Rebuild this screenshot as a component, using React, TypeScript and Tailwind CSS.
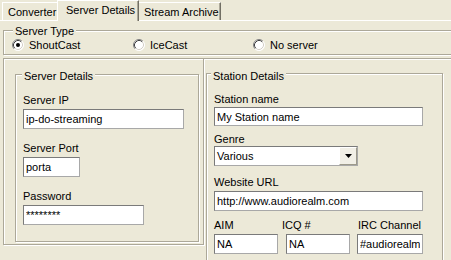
import React from 'react'

const etched = 'border border-[#aca899] shadow-[inset_1px_1px_0_#fff,1px_1px_0_#fff]'
const field =
  'block h-[20px] bg-white px-[2px] text-[11px] text-black outline-none border border-t-[#7a7a7a] border-l-[#7a7a7a] border-r-[#a8a8a8] border-b-[#a8a8a8]'

function Radio({ checked }: { checked?: boolean }) {
  return (
    <svg width="12" height="12" viewBox="0 0 12 12" className="shrink-0">
      <circle cx="6" cy="6" r="5.5" fill="#fff" />
      <path d="M2.11 9.89A5.5 5.5 0 0 1 9.89 2.11" fill="none" stroke="#808080" />
      <path d="M9.89 2.11A5.5 5.5 0 0 1 2.11 9.89" fill="none" stroke="#fff" />
      <path d="M2.82 9.18A4.5 4.5 0 0 1 9.18 2.82" fill="none" stroke="#404040" />
      <path d="M9.18 2.82A4.5 4.5 0 0 1 2.82 9.18" fill="none" stroke="#d4d0c8" />
      {checked && <circle cx="6" cy="6" r="2" fill="#000" />}
    </svg>
  )
}

function Field({ value, className }: { value: string; className: string }) {
  return <input readOnly value={value} className={`${field} ${className}`} />
}

export default function App() {
  return (
    <div className="w-[451px] h-[260px] overflow-hidden bg-[#ece9d8] text-[11px] leading-[13px] text-black font-['Liberation_Sans',Arial,sans-serif]">
      {/* Tabs */}
      <div className="relative z-10 flex items-end h-[20px]">
        <div className="ml-[2px] w-[57px] h-[18px] border-t border-l border-white pl-[5px] pt-[3px]">Converter</div>
        <div className="relative z-10 -mx-[2px] -mb-[1px] w-[82px] h-[21px] bg-[#ece9d8] border-t border-l border-white border-r border-r-[#716f64] shadow-[inset_-1px_0_0_#aca899] pl-[8px] pt-[3px]">
          Server Details
        </div>
        <div className="w-[84px] h-[18px] border-t border-l border-white border-r border-r-[#716f64] shadow-[inset_-1px_0_0_#aca899] pl-[6px] pt-[3px]">
          Stream Archive
        </div>
      </div>

      <div className="border-t border-white">
        {/* Server Type */}
        <div className={`relative mt-[9px] ml-[3px] w-[460px] h-[25px] ${etched}`}>
          <span className="absolute left-[9px] -top-[6px] px-[2px] bg-[#ece9d8]">Server Type</span>
          <div className="flex pl-[8px] pt-[8px]">
            <div className="flex items-center gap-[5px] w-[121px] h-[12px]">
              <Radio checked />
              <span>ShoutCast</span>
            </div>
            <div className="flex items-center gap-[5px] w-[120px] h-[12px]">
              <Radio />
              <span>IceCast</span>
            </div>
            <div className="flex items-center gap-[5px] w-[120px] h-[12px]">
              <Radio />
              <span>No server</span>
            </div>
          </div>
        </div>

        <div className="flex mt-[3px]">
          {/* Server Details */}
          <div className={`ml-[3px] w-[201px] h-[187px] shrink-0 ${etched}`}>
            <div className={`relative ml-[11px] mt-[15px] w-[184px] h-[168px] ${etched}`}>
              <span className="absolute left-[6px] -top-[5px] px-[2px] bg-[#ece9d8]">Server Details</span>
              <div className="pl-[7px] pt-[19px]">
                <div>Server IP</div>
                <Field value="ip-do-streaming" className="mt-[2px] w-[161px]" />
                <div className="mt-[13px]">Server Port</div>
                <Field value="porta" className="mt-[2px] w-[57px]" />
                <div className="mt-[13px]">Password</div>
                <Field value="********" className="mt-[2px] w-[121px]" />
              </div>
            </div>
          </div>

          {/* Station Details */}
          <div className="flex-1 h-[210px] border-t border-[#aca899] shadow-[inset_0_1px_0_#fff]">
            <div className={`relative ml-[2px] mt-[14px] w-[237px] h-[200px] ${etched}`}>
              <span className="absolute left-[4px] -top-[4px] px-[2px] bg-[#ece9d8]">Station Details</span>
              <div className="pl-[7px] pt-[19px]">
                <div>Station name</div>
                <Field value="My Station name" className="mt-[1px] w-[209px] !h-[19px]" />
                <div className="mt-[7px]">Genre</div>
                <div className="flex w-[144px] h-[20px] bg-white border border-t-[#7a7a7a] border-l-[#7a7a7a] border-r-[#a8a8a8] border-b-[#a8a8a8]">
                  <span className="flex-1 pl-[2px] leading-[18px]">Various</span>
                  <div className="w-[18px] h-[18px] flex items-center justify-center bg-[#f1efe6] border border-t-white border-l-white border-r-[#9d9a8b] border-b-[#9d9a8b]">
                    <svg width="7" height="4" viewBox="0 0 7 4">
                      <polygon points="0,0 7,0 3.5,4" fill="#000" />
                    </svg>
                  </div>
                </div>
                <div className="mt-[10px]">Website URL</div>
                <Field value="http://www.audiorealm.com" className="mt-[2px] w-[209px]" />
                <div className="flex mt-[8px]">
                  <span className="w-[68px]">AIM</span>
                  <span className="w-[76px]">ICQ #</span>
                  <span>IRC Channel</span>
                </div>
                <div className="flex mt-[2px]">
                  <Field value="NA" className="w-[64px]" />
                  <Field value="NA" className="ml-[8px] w-[64px]" />
                  <Field value="#audiorealm" className="ml-[7px] w-[66px]" />
                </div>
              </div>
            </div>
          </div>
        </div>
      </div>
    </div>
  )
}
